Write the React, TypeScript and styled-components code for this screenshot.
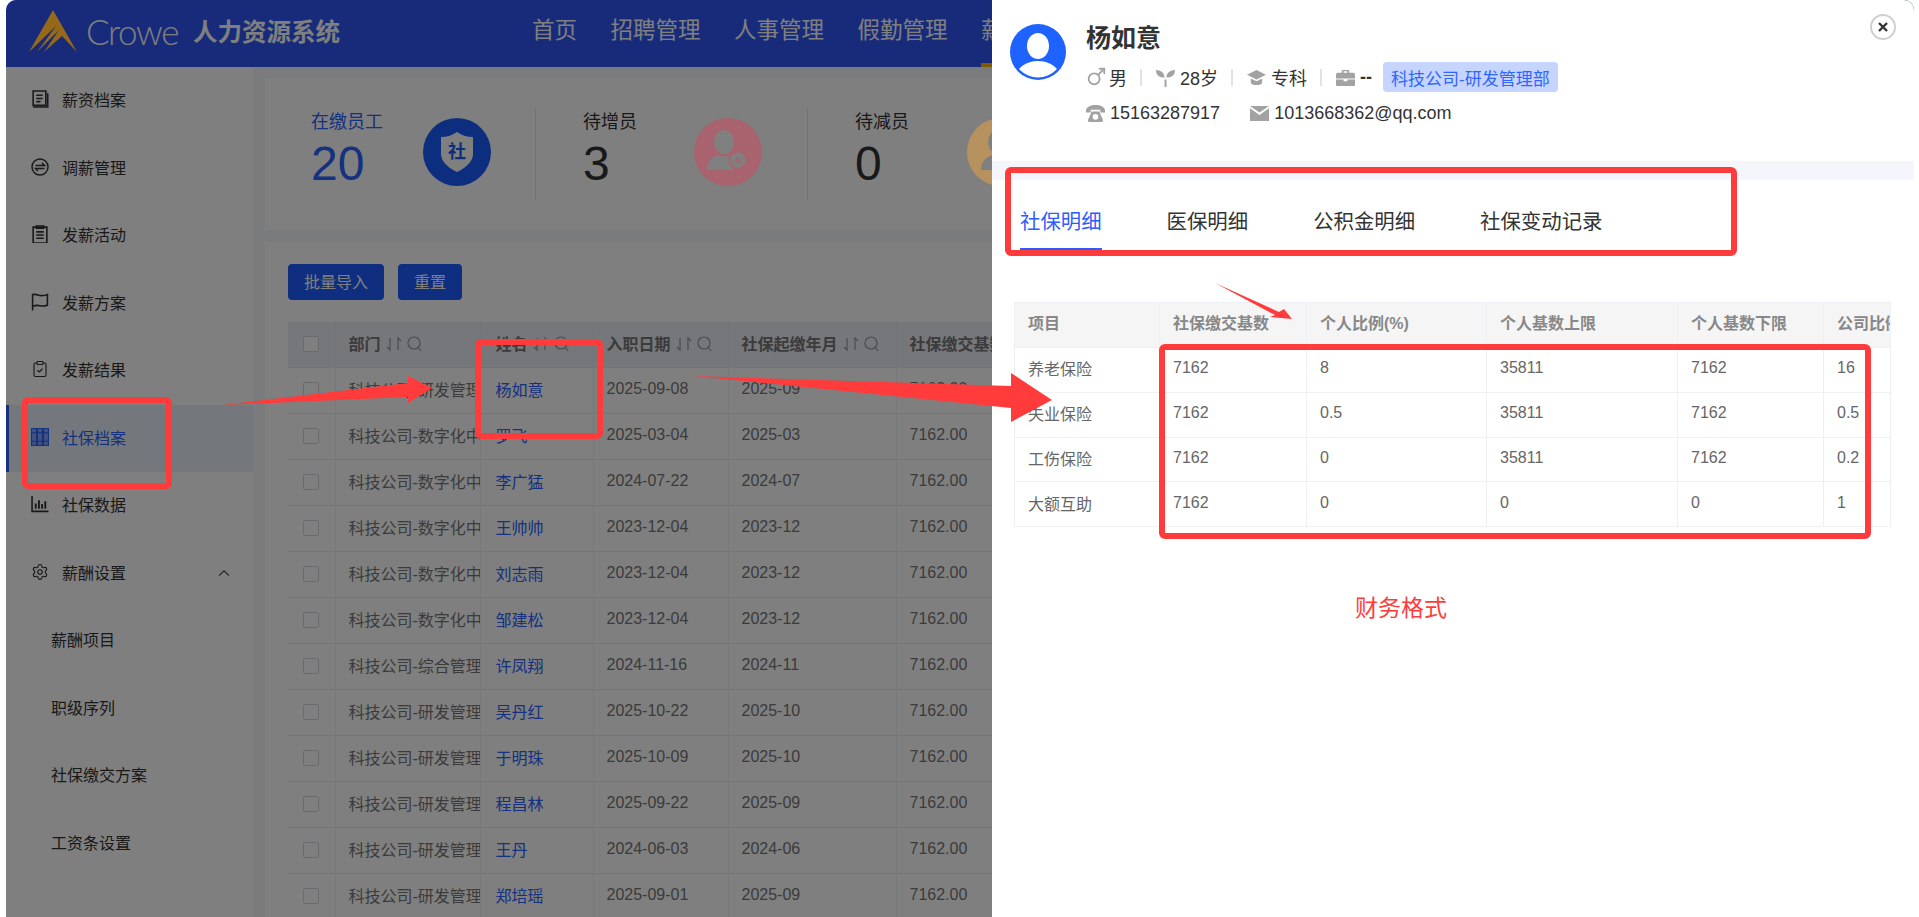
import React from "react";
import styled, { createGlobalStyle } from "styled-components";
import { ChevronUp, ClipboardCheck, Mars, Settings } from "lucide-react";

const Global = createGlobalStyle`
  html, body { margin: 0; padding: 0; background: #fff; height: 917px; overflow: hidden; }
  * { box-sizing: border-box; }
  body { font-family: "Liberation Sans", "Noto Sans CJK SC", sans-serif; color: #333; }
`;

const Root = styled.div`
  position: relative;
  width: 1919px;
  height: 917px;
  padding: 0 5px 0 6px;
  overflow: hidden;
  background: #fff;
`;
const Frame = styled.div`
  position: relative;
  height: 917px;
  overflow: hidden;
  border-top-left-radius: 10px;
  border-top-right-radius: 10px;
  background: #f5f6fa;
`;
const Mask = styled.div`
  position: absolute;
  inset: 0;
  z-index: 1;
  background: rgba(0, 0, 0, 0.5);
`;

/* ---------- top bar ---------- */
const Header = styled.header`
  height: 67px;
  background: #2e56f4;
  display: flex;
  align-items: center;
  padding: 0 0 6px 23px;
`;
const LogoMark = styled.svg`
  position: relative;
  z-index: 2;
  width: 48px;
  height: 42px;
  flex: none;
`;
const Brand = styled.span`
  margin-left: 9px;
  font-family: "Lato", sans-serif;
  font-weight: 300;
  font-size: 35px;
  letter-spacing: -1.4px;
  color: #fff;
  width: 107px;
  flex: none;
`;
const SystemName = styled.span`
  font-size: 24.5px;
  font-weight: 700;
  color: #fff;
  width: 339px;
  flex: none;
`;
const Nav = styled.nav`
  display: flex;
  gap: 33.5px;
  height: 67px;
  flex: none;
  align-self: flex-start;
`;
const NavItem = styled.a<{ $active?: boolean }>`
  display: flex;
  align-items: center;
  font-size: 22.5px;
  color: #fff;
  white-space: nowrap;
  border-bottom: 4px solid ${(p) => (p.$active ? "#ffb400" : "transparent")};
  padding-bottom: 8px;
`;

/* ---------- body ---------- */
const Body = styled.div`
  display: flex;
  height: 850px;
`;
const Sidebar = styled.aside`
  width: 247px;
  flex: none;
  background: #fff;
`;
const SideItem = styled.div<{ $active?: boolean }>`
  height: 67.5px;
  display: flex;
  align-items: center;
  gap: 13px;
  padding: 0 0 3px 25px;
  font-size: 16px;
  color: ${(p) => (p.$active ? "#2a62ff" : "#333")};
  background: ${(p) => (p.$active ? "#e8f1f8" : "transparent")};
  box-shadow: ${(p) => (p.$active ? "inset 3px 0 0 #2a62ff" : "none")};
  position: relative;
  svg { width: 18px; height: 18px; flex: none; }
`;
const SubItem = styled.div`
  height: 67.5px;
  display: flex;
  align-items: center;
  padding: 0 0 3px 45px;
  font-size: 16px;
  color: #333;
`;
const Caret = styled.span`
  position: absolute;
  left: 209px;
  top: 24px;
  display: flex;
  color: #555;
`;
const Main = styled.main`
  width: 1400px;
  flex: none;
  padding: 11px 0 0 12px;
`;
const StatCard = styled.section`
  width: 1380px;
  height: 152px;
  background: #fff;
  padding-top: 30px;
  display: flex;
  margin-bottom: 12px;
`;
const Stat = styled.div`
  width: 272px;
  height: 92px;
  padding-left: 47px;
  border-right: 1px solid #e6e6e6;
  display: flex;
  flex: none;
  &:first-child { margin-left: -1px; }
  &:nth-child(2) > div:last-child { margin-left: -1px; }
`;
const StatText = styled.div`
  width: 112px;
  flex: none;
`;
const StatLabel = styled.div<{ $blue?: boolean }>`
  font-size: 18px;
  line-height: 28px;
  color: ${(p) => (p.$blue ? "#2a62ff" : "#333")};
`;
const StatValue = styled.div<{ $blue?: boolean }>`
  margin-top: 1px;
  font-size: 48px;
  line-height: 54px;
  color: ${(p) => (p.$blue ? "#2a62ff" : "#333")};
`;
const StatIcon = styled.div<{ $color: string; $raised?: boolean }>`
  position: relative;
  z-index: ${(p) => (p.$raised ? 2 : 0)};
  width: 68px;
  height: 68px;
  margin-top: 10px;
  border-radius: 50%;
  background: ${(p) => p.$color};
  display: flex;
  align-items: center;
  justify-content: center;
  overflow: hidden;
  flex: none;
`;
const ListCard = styled.section`
  width: 1380px;
  height: 680px;
  background: #fff;
  padding: 22px 0 0 23px;
`;
const Buttons = styled.div`
  display: flex;
  gap: 14px;
  margin-bottom: 22px;
`;
const Button = styled.button`
  height: 36px;
  padding: 0 16px 2px;
  border: 0;
  border-radius: 4px;
  background: #1e5cff;
  color: #fff;
  font: inherit;
  font-size: 16px;
`;
const StaffTable = styled.table`
  table-layout: fixed;
  border-collapse: collapse;
  width: 908px;
  font-size: 16px;
  color: #777;
`;
const StaffHead = styled.th<{ $link?: boolean }>`
  height: 45px;
  padding: 0 0 3px ${(p) => (p.$link ? 15 : 13)}px;
  background: #eceef4;
  text-align: left;
  font-weight: 700;
  color: #777;
  white-space: nowrap;
  overflow: hidden;
  border-right: 1px solid #e6e8ef;
  svg { margin-left: 4px; vertical-align: -3px; }
`;
const CheckHead = styled(StaffHead)`
  padding: 0 0 0 15px;
`;
const StaffCell = styled.td<{ $link?: boolean }>`
  height: 46px;
  padding: 0 0 3px ${(p) => (p.$link ? 15 : 13)}px;
  border-top: 1px solid #e6e8ef;
  border-right: 1px solid #eef0f4;
  white-space: nowrap;
  overflow: hidden;
  color: ${(p) => (p.$link ? "#2a62ff" : "#777")};
`;
const CheckCell = styled(StaffCell)`
  padding: 0 0 0 15px;
`;
const Check = styled.span`
  display: block;
  width: 16px;
  height: 16px;
  border: 1px solid #d5d7dc;
  border-radius: 2px;
  background: #fff;
`;

/* ---------- drawer ---------- */
const Drawer = styled.aside`
  position: absolute;
  z-index: 3;
  top: 0;
  bottom: 0;
  right: 0;
  width: 922px;
  background: #fff;
`;
const Profile = styled.div`
  height: 161px;
  padding: 24px 0 0 18px;
  display: flex;
  gap: 20px;
`;
const Avatar = styled.svg`
  width: 56px;
  height: 56px;
  flex: none;
`;
const Name = styled.h2`
  margin: 0;
  font-size: 25px;
  line-height: 28px;
  font-weight: 700;
  color: #333;
`;
const InfoRow = styled.div`
  margin-top: 10px;
  height: 30px;
  display: flex;
  align-items: center;
  font-size: 18px;
  color: #333;
`;
const ContactRow = styled.div`
  margin-top: 8px;
  height: 26px;
  display: flex;
  align-items: center;
  font-size: 18px;
  color: #333;
`;
const Info = styled.span`
  display: flex;
  align-items: center;
  gap: 5px;
  svg { width: 19px; height: 19px; flex: none; color: #a2a2a2; }
`;
const MaleInfo = styled(Info)`
  gap: 2px;
  svg { width: 22px; height: 22px; margin-left: -1px; }
`;
const Sep = styled.i`
  width: 2px;
  height: 17px;
  background: #e2e2e2;
  margin: 0 14px 0 13px;
`;
const Tag = styled.span`
  height: 30px;
  margin-left: 11px;
  padding: 0 8px;
  display: flex;
  align-items: center;
  font-size: 17px;
  color: #2f66ff;
  background: #c5d5ff;
  border-radius: 4px;
`;
const ContactGap = styled.span`
  width: 30px;
`;
const Close = styled.button`
  position: absolute;
  top: 14px;
  right: 18px;
  width: 26px;
  height: 26px;
  padding: 0;
  border: 2px solid #cfcfcf;
  border-radius: 50%;
  background: #fff;
  display: flex;
  align-items: center;
  justify-content: center;
  color: #333;
`;
const Band = styled.div`
  height: 19px;
  background: #f5f6fb;
`;
const Tabs = styled.div`
  padding: 20px 28px 0;
  display: flex;
  gap: 65px;
`;
const Tab = styled.div<{ $active?: boolean }>`
  height: 50px;
  line-height: 44px;
  font-size: 20.4px;
  color: ${(p) => (p.$active ? "#2f5cff" : "#333")};
  border-bottom: 2px solid ${(p) => (p.$active ? "#2f5cff" : "transparent")};
`;
const DetailWrap = styled.div`
  margin: 52px 23px 0 22px;
  overflow: hidden;
  border: 1px solid #eef0f5;
  border-width: 0 1px 0 0;
`;
const DetailTable = styled.table`
  table-layout: fixed;
  border-collapse: collapse;
  width: 877px;
  font-size: 16px;
`;
const DetailHead = styled.th`
  height: 45px;
  padding: 0 0 7px 13px;
  background: #f5f5f6;
  border: 1px solid #eef0f5;
  color: #888;
  font-weight: 700;
  text-align: left;
  white-space: nowrap;
  overflow: hidden;
`;
const DetailCell = styled.td`
  height: 44.75px;
  padding: 0 0 3px 13px;
  border: 1px solid #eef0f5;
  color: #666;
  white-space: nowrap;
  overflow: hidden;
`;

/* ---------- annotations lying over the page ---------- */
const RedBox = styled.div<{ $x: number; $y: number; $w: number; $h: number }>`
  position: absolute;
  z-index: 5;
  left: ${(p) => p.$x}px;
  top: ${(p) => p.$y}px;
  width: ${(p) => p.$w}px;
  height: ${(p) => p.$h}px;
  border: 6px solid #ff3b3b;
  border-radius: 6px;
`;
const Arrows = styled.svg`
  position: absolute;
  z-index: 6;
  left: 0;
  top: 0;
  width: 1919px;
  height: 917px;
  pointer-events: none;
`;
const Note = styled.div`
  position: absolute;
  z-index: 5;
  left: 1355px;
  top: 592px;
  font-size: 23px;
  line-height: 32px;
  color: #ff3b3b;
`;

/* ---------- icons ---------- */
const stroke = { fill: "none", stroke: "currentColor", strokeWidth: 1.5 } as const;
const IconDoc = () => (
  <svg viewBox="0 0 17 17" {...stroke}>
    <path d="M2 1h12v13.5H2z" />
    <path d="M2 16h13.8V3" />
    <path d="M5 5h6M5 8h6M5 11h4" />
  </svg>
);
const IconSwap = () => (
  <svg viewBox="0 0 18 18" {...stroke}>
    <circle cx="9" cy="9" r="8" />
    <path d="M4.5 7.5h9L11 5M13.5 10.5h-9L7 13" />
  </svg>
);
const IconClip = () => (
  <svg viewBox="0 0 17 17" {...stroke}>
    <path d="M2 2h13v15H2z" />
    <path d="M5 1h7v2H5zM5 6.5h7M5 9.5h7M5 12.5h7" />
  </svg>
);
const IconFlag = () => (
  <svg viewBox="0 0 17 17" {...stroke}>
    <path d="M1.5 16.5V1.5c4-1 5 1 8 1 2 0 4 0 6-1v10c-3 1-5 1-7 .5s-4-.5-7 .5" />
  </svg>
);
const IconColumns = () => (
  <svg viewBox="0 0 17 17" fill="currentColor" stroke="currentColor" strokeWidth="1">
    <path fillOpacity=".55" d="M.5.5h4.7v16H.5zM6.1.5h4.7v16H6.1zM11.8.5h4.7v16h-4.7z" />
    <path d="M.5 4.5h16M.5 12.5h16" />
  </svg>
);
const IconBars = () => (
  <svg viewBox="0 0 17 17" {...stroke}>
    <path d="M1 1v14.5h15.5" />
    <path d="M4.5 13V8M7.5 13V5M10.5 13V8.5M13.5 13V6" strokeWidth="1.8" />
  </svg>
);
const IconSprout = () => (
  <svg viewBox="0 0 20 20" fill="currentColor">
    <path d="M9 20V10C9 5 5 2 0 2c0 5 3 8 9 8zM11 20h-2v-8h2zM11 10c0-5 4-8 9-8 0 5-3 8-9 8z" />
  </svg>
);
const IconHat = () => (
  <svg viewBox="0 0 20 20" fill="currentColor">
    <path d="M10 2l10 5-10 5L0 7zM4 11l6 3 6-3v4c0 2-3 3-6 3s-6-1-6-3z" />
  </svg>
);
const IconCase = () => (
  <svg viewBox="0 0 20 20" fill="currentColor">
    <path fillRule="evenodd" d="M7 2h6a1 1 0 0 1 1 1v2h4a2 2 0 0 1 2 2v4H0V7a2 2 0 0 1 2-2h4V3a1 1 0 0 1 1-1zm1 1.5V5h4V3.5zM0 12h8v2h4v-2h8v6a1 1 0 0 1-1 1H1a1 1 0 0 1-1-1z" />
  </svg>
);
const IconPhone = () => (
  <svg viewBox="0 0 20 20" fill="currentColor">
    <path d="M0 7c0-4 5-6 10-6s10 2 10 6v2h-5V6H5v3H0z" />
    <path fillRule="evenodd" d="M6 8h8l4 9a2 2 0 0 1-2 2H4a2 2 0 0 1-2-2zm4 2.5a3 3 0 1 0 0 6 3 3 0 0 0 0-6z" />
  </svg>
);
const IconMail = () => (
  <svg viewBox="0 0 20 20" fill="currentColor">
    <path d="M0 2h20L10 9zM0 4.5l10 7 10-7V18H0z" />
  </svg>
);
const SortIcon = () => (
  <svg width="40" height="18" viewBox="0 0 40 18" fill="none" stroke="#999" strokeWidth="1.2">
    <path d="M5 3v12l-3-3M13 15V3l3 3" />
    <circle cx="29" cy="8" r="6" />
    <path d="M33 12l3 4" />
  </svg>
);

/* ---------- data ---------- */
const staff = [
  ["科技公司-研发管理部", "杨如意", "2025-09-08", "2025-09"],
  ["科技公司-数字化中心", "罗飞", "2025-03-04", "2025-03"],
  ["科技公司-数字化中心", "李广猛", "2024-07-22", "2024-07"],
  ["科技公司-数字化中心", "王帅帅", "2023-12-04", "2023-12"],
  ["科技公司-数字化中心", "刘志雨", "2023-12-04", "2023-12"],
  ["科技公司-数字化中心", "邹建松", "2023-12-04", "2023-12"],
  ["科技公司-综合管理部", "许凤翔", "2024-11-16", "2024-11"],
  ["科技公司-研发管理部", "吴丹红", "2025-10-22", "2025-10"],
  ["科技公司-研发管理部", "于明珠", "2025-10-09", "2025-10"],
  ["科技公司-研发管理部", "程昌林", "2025-09-22", "2025-09"],
  ["科技公司-研发管理部", "王丹", "2024-06-03", "2024-06"],
  ["科技公司-研发管理部", "郑培瑶", "2025-09-01", "2025-09"],
];
const detailHead = ["项目", "社保缴交基数", "个人比例(%)", "个人基数上限", "个人基数下限", "公司比例(%)"];
const detailRows = [
  ["养老保险", "7162", "8", "35811", "7162", "16"],
  ["失业保险", "7162", "0.5", "35811", "7162", "0.5"],
  ["工伤保险", "7162", "0", "35811", "7162", "0.2"],
  ["大额互助", "7162", "0", "0", "0", "1"],
];
const staffCols = [47, 145, 113, 135, 168, 300];
const detailCols = [145, 147, 180, 191, 146, 68];

export default function App() {
  return (
    <Root>
      <Global />
      <Frame>
        <Header>
          <LogoMark viewBox="0 0 48 42">
            <path fill="#96691a" d="M24 0L48 42 33 26 15 42 30 20 8 42 27 16 0 42z" />
          </LogoMark>
          <Brand>Crowe</Brand>
          <SystemName>人力资源系统</SystemName>
          <Nav>
            <NavItem>首页</NavItem>
            <NavItem>招聘管理</NavItem>
            <NavItem>人事管理</NavItem>
            <NavItem>假勤管理</NavItem>
            <NavItem $active>薪酬管理</NavItem>
          </Nav>
        </Header>
        <Body>
          <Sidebar>
            <SideItem><IconDoc />薪资档案</SideItem>
            <SideItem><IconSwap />调薪管理</SideItem>
            <SideItem><IconClip />发薪活动</SideItem>
            <SideItem><IconFlag />发薪方案</SideItem>
            <SideItem><ClipboardCheck strokeWidth={1.5} />发薪结果</SideItem>
            <SideItem $active><IconColumns />社保档案</SideItem>
            <SideItem><IconBars />社保数据</SideItem>
            <SideItem>
              <Settings strokeWidth={1.5} />薪酬设置
              <Caret><ChevronUp size={16} strokeWidth={1.5} /></Caret>
            </SideItem>
            <SubItem>薪酬项目</SubItem>
            <SubItem>职级序列</SubItem>
            <SubItem>社保缴交方案</SubItem>
            <SubItem>工资条设置</SubItem>
          </Sidebar>
          <Main>
            <StatCard>
              <Stat>
                <StatText>
                  <StatLabel $blue>在缴员工</StatLabel>
                  <StatValue $blue>20</StatValue>
                </StatText>
                <StatIcon $color="#1a5cff">
                  <svg width="34" height="40" viewBox="0 0 34 40">
                    <path fill="#fff" d="M17 0c4 3 10 5 16 5v17c0 8-8 14-16 18C9 36 1 30 1 22V5c6 0 12-2 16-5z" />
                    <text x="17" y="26" textAnchor="middle" fontSize="18" fontWeight="700" fill="#1a5cff">社</text>
                  </svg>
                </StatIcon>
              </Stat>
              <Stat>
                <StatText>
                  <StatLabel>待增员</StatLabel>
                  <StatValue>3</StatValue>
                </StatText>
                <StatIcon $color="#a9636f" $raised>
                  <svg width="42" height="44" viewBox="0 0 42 44" fill="#808080">
                    <ellipse cx="17" cy="12" rx="10" ry="12" />
                    <path d="M0 40c0-9 6-13 11-15 4 2 8 2 12 0l4 3c-3 3-3 9 0 12z" />
                    <circle cx="31" cy="30" r="8.5" stroke="#a9636f" strokeWidth="2" />
                    <path d="M27.5 30h7M31 26.5v7" stroke="#a9636f" strokeWidth="1.6" />
                  </svg>
                </StatIcon>
              </Stat>
              <Stat>
                <StatText>
                  <StatLabel>待减员</StatLabel>
                  <StatValue>0</StatValue>
                </StatText>
                <StatIcon $color="#b8925e" $raised>
                  <svg width="40" height="44" viewBox="0 0 40 44" fill="#808080">
                    <ellipse cx="17" cy="12" rx="10" ry="12" />
                    <path d="M0 40c0-9 6-13 11-15 4 2 8 2 12 0l4 3c-3 3-3 9 0 12z" />
                  </svg>
                </StatIcon>
              </Stat>
            </StatCard>
            <ListCard>
              <Buttons>
                <Button>批量导入</Button>
                <Button>重置</Button>
              </Buttons>
              <StaffTable>
                <colgroup>
                  {staffCols.map((w, i) => <col key={i} width={w} />)}
                </colgroup>
                <thead>
                  <tr>
                    <CheckHead><Check /></CheckHead>
                    <StaffHead>部门<SortIcon /></StaffHead>
                    <StaffHead $link>姓名<SortIcon /></StaffHead>
                    <StaffHead>入职日期<SortIcon /></StaffHead>
                    <StaffHead>社保起缴年月<SortIcon /></StaffHead>
                    <StaffHead>社保缴交基数<SortIcon /></StaffHead>
                  </tr>
                </thead>
                <tbody>
                  {staff.map((r) => (
                    <tr key={r[1]}>
                      <CheckCell><Check /></CheckCell>
                      <StaffCell>{r[0]}</StaffCell>
                      <StaffCell $link>{r[1]}</StaffCell>
                      <StaffCell>{r[2]}</StaffCell>
                      <StaffCell>{r[3]}</StaffCell>
                      <StaffCell>7162.00</StaffCell>
                    </tr>
                  ))}
                </tbody>
              </StaffTable>
            </ListCard>
          </Main>
        </Body>
        <Mask />
        <Drawer>
          <Profile>
            <Avatar viewBox="0 0 56 56">
              <defs>
                <clipPath id="avatar-clip"><circle cx="28" cy="28" r="25.5" /></clipPath>
              </defs>
              <circle cx="28" cy="28" r="28" fill="#1e62ff" />
              <g clipPath="url(#avatar-clip)" fill="#fff">
                <ellipse cx="28" cy="22" rx="11" ry="13" />
                <ellipse cx="28" cy="53" rx="22" ry="16" />
              </g>
            </Avatar>
            <div>
              <Name>杨如意</Name>
              <InfoRow>
                <MaleInfo><Mars strokeWidth={2} />男</MaleInfo>
                <Sep />
                <Info><IconSprout />28岁</Info>
                <Sep />
                <Info><IconHat />专科</Info>
                <Sep />
                <Info><IconCase /><b>--</b></Info>
                <Tag>科技公司-研发管理部</Tag>
              </InfoRow>
              <ContactRow>
                <Info><IconPhone />15163287917</Info>
                <ContactGap />
                <Info><IconMail />1013668362@qq.com</Info>
              </ContactRow>
            </div>
          </Profile>
          <Close aria-label="关闭">
            <svg width="10" height="10" viewBox="0 0 10 10" stroke="currentColor" strokeWidth="2.4">
              <path d="M1 1l8 8M9 1l-8 8" />
            </svg>
          </Close>
          <Band />
          <Tabs>
            <Tab $active>社保明细</Tab>
            <Tab>医保明细</Tab>
            <Tab>公积金明细</Tab>
            <Tab>社保变动记录</Tab>
          </Tabs>
          <DetailWrap>
            <DetailTable>
              <colgroup>
                {detailCols.map((w, i) => <col key={i} width={w} />)}
              </colgroup>
              <thead>
                <tr>{detailHead.map((h) => <DetailHead key={h}>{h}</DetailHead>)}</tr>
              </thead>
              <tbody>
                {detailRows.map((r) => (
                  <tr key={r[0]}>
                    {r.map((c, i) => <DetailCell key={i}>{c}</DetailCell>)}
                  </tr>
                ))}
              </tbody>
            </DetailTable>
          </DetailWrap>
        </Drawer>
      </Frame>
      <RedBox $x={22} $y={397} $w={150} $h={92} />
      <RedBox $x={475} $y={339} $w={128} $h={100} />
      <RedBox $x={1005} $y={167} $w={732} $h={89} />
      <RedBox $x={1159} $y={344} $w={712} $h={195} />
      <Arrows viewBox="0 0 1919 917">
        <polygon fill="#ff3b3b" points="223,405 408,383 408,376 432,388 408,403 408,397" />
        <polygon fill="#ff3b3b" points="694,376 1011,386 1011,373 1052,400 1011,422 1011,408" />
        <polygon fill="#ff3b3b" points="1215,283 1279,312 1284,309 1292,319 1270,317 1275,315" />
      </Arrows>
      <Note>财务格式</Note>
    </Root>
  );
}
